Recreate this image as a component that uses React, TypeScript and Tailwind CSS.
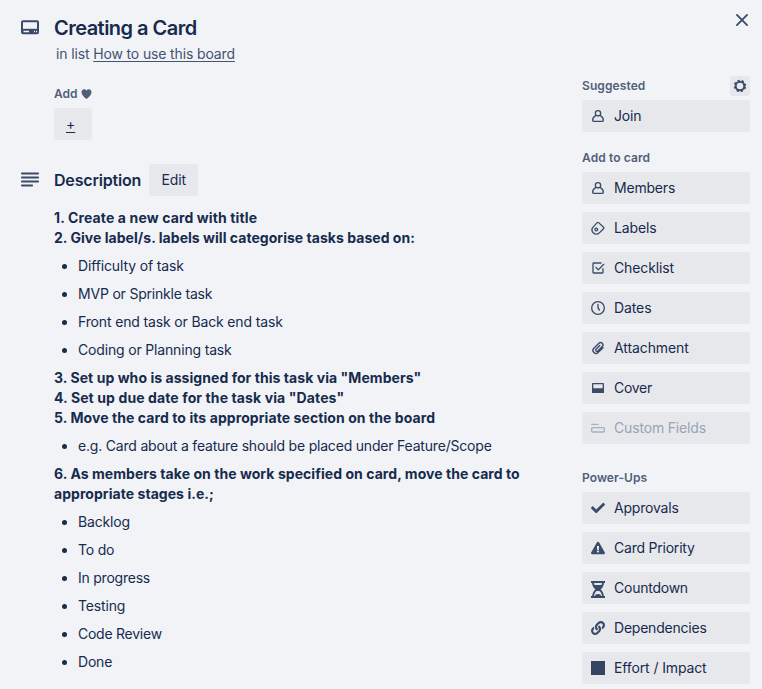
import type { ReactNode } from "react";
import { FaCheck, FaExclamationTriangle, FaLink } from "react-icons/fa";

function Svg({ children }: { children: ReactNode }) {
  return (
    <svg viewBox="0 0 24 24" className="size-4 shrink-0" fill="none" stroke="currentColor" strokeWidth="2" strokeLinejoin="round" strokeLinecap="round">
      {children}
    </svg>
  );
}

const PersonIcon = () => (
  <Svg>
    <circle cx="12" cy="8" r="4" />
    <path d="M8.500 11.500C5.500 13 4 15.500 4 18.500c0 1 .4 1.500 1.500 1.500h13c1.100 0 1.500-.5 1.500-1.500 0-3-1.500-5.500-4.500-7" />
  </Svg>
);
const LabelIcon = () => (
  <Svg>
    <path d="M4 11.500 10.700 4a1.500 1.500 0 0 1 2.200-.1l7.400 7a1.500 1.500 0 0 1 0 2.200l-6.300 6.200a6.100 6.100 0 0 1-8.800.2c-2.300-2.200-2.900-5.400-1.200-8Z" />
    <circle cx="9.400" cy="14.200" r="2" />
  </Svg>
);
const ChecklistIcon = () => (
  <Svg>
    <path d="M16.500 4.500H5.500a1 1 0 0 0-1 1v13a1 1 0 0 0 1 1h13a1 1 0 0 0 1-1V13" />
    <path d="m9 11 3.500 3.800L20.500 6.500" />
  </Svg>
);
const ClockIcon = () => (
  <Svg>
    <circle cx="12" cy="12" r="9.500" />
    <path d="M12 6.500V12l2.200 3" />
  </Svg>
);
const ClipIcon = () => (
  <Svg>
    <path d="m19.500 11.500-7.300 7.300a4.500 4.500 0 0 1-6.400-6.400l7.600-7.600a3.500 3.500 0 0 1 5 0c1.400 1.400 1.400 3.500 0 4.900l-6.800 6.800a1.800 1.800 0 0 1-2.600-2.600l5.700-5.700" />
  </Svg>
);
const CoverIcon = () => (
  <Svg>
    <path d="M4 5.500h16v13H4z" />
    <path d="M4 13.500h16v5H4z" fill="currentColor" />
  </Svg>
);
const FieldsIcon = () => (
  <Svg>
    <path d="M2.500 6.500h9.500" />
    <rect x="2.500" y="11.500" width="19" height="6.500" rx="1.500" />
  </Svg>
);
const HourglassIcon = () => (
  <svg viewBox="0 0 14 17" className="h-[17px] w-3.5 shrink-0 translate-y-px" fill="none" stroke="currentColor">
    <path d="M0 1h14M0 16h14" strokeWidth="2" />
    <path d="M2 1c0 4 1.200 5.700 4 7.500C3.200 10.300 2 12 2 16M12 1c0 4-1.200 5.700-4 7.500 2.800 1.800 4 3.500 4 7.500" strokeWidth="1.900" />
    <path d="M2.500 4h9L8.800 8.500 9 10H5l.2-1.500z" fill="currentColor" stroke="none" />
    <path d="M4 15c0-1.200 1.200-2 3-2s3 .8 3 2z" fill="currentColor" stroke="none" />
  </svg>
);
const SquareIcon = () => <span className="size-3.5 bg-[#344563]" />;

type Item = { label: string; icon: ReactNode; track?: string; disabled?: boolean };

function SideButton({ label, icon, track = "", disabled }: Item) {
  return (
    <button className={`flex h-8 w-[168px] items-center rounded-[3px] bg-[#e7e8ec] pl-2 text-sm leading-5 ${disabled ? "text-[#97a3b6]" : "text-[#172b4d]"}`}>
      <span className={`mr-2 flex size-4 items-center justify-center ${disabled ? "text-[#a5b0c2]" : "text-[#3b4b68]"}`}>{icon}</span>
      <span className={`whitespace-nowrap ${track}`}>{label}</span>
    </button>
  );
}

const addItems: Item[] = [
  { label: "Members", icon: <PersonIcon />, track: "tracking-[-0.2px]" },
  { label: "Labels", icon: <LabelIcon />, track: "tracking-[-0.15px]" },
  { label: "Checklist", icon: <ChecklistIcon />, track: "tracking-[-0.12px]" },
  { label: "Dates", icon: <ClockIcon />, track: "tracking-[-0.1px]" },
  { label: "Attachment", icon: <ClipIcon />, track: "tracking-[-0.1px]" },
  { label: "Cover", icon: <CoverIcon />, track: "tracking-[-0.3px]" },
  { label: "Custom Fields", icon: <FieldsIcon />, track: "tracking-[-0.17px]", disabled: true },
];
const powerItems: Item[] = [
  { label: "Approvals", icon: <FaCheck className="size-3.5" />, track: "tracking-[-0.2px]" },
  { label: "Card Priority", icon: <FaExclamationTriangle className="size-3.5" />, track: "tracking-[-0.22px]" },
  { label: "Countdown", icon: <HourglassIcon />, track: "tracking-[-0.24px]" },
  { label: "Dependencies", icon: <FaLink className="size-3.5" />, track: "tracking-[-0.22px]" },
  { label: "Effort / Impact", icon: <SquareIcon />, track: "tracking-[-0.12px]" },
];

type Line = { text: string; track: string };

function Bullets({ items }: { items: Line[] }) {
  return (
    <ul className="my-2 flex flex-col gap-2">
      {items.map((i) => (
        <li key={i.text} className="flex h-5 items-center">
          <span className="mr-[11px] ml-2 size-[5px] rounded-full bg-[#172b4d]" />
          <span className={`whitespace-nowrap ${i.track}`}>{i.text}</span>
        </li>
      ))}
    </ul>
  );
}

function Strong({ lines }: { lines: Line[] }) {
  return (
    <div className="font-bold">
      {lines.map((l) => (
        <p key={l.text} className={`h-5 whitespace-nowrap ${l.track}`}>{l.text}</p>
      ))}
    </div>
  );
}

export default function App() {
  return (
    <div className="flex h-[689px] w-[762px] overflow-hidden bg-[#f1f3f7] font-['Inter',sans-serif] text-sm leading-5 text-[#172b4d]">
      <main className="w-[582px] shrink-0 pl-5">
        <header className="flex pt-4">
          <svg viewBox="0 0 20 16" className="mt-1 mr-3.5 h-4 w-5 text-[#3b4b68]" fill="none">
            <rect x="2" y="1.300" width="16" height="12" rx="1" stroke="currentColor" strokeWidth="2" />
            <path d="M2 8.800h16v4.500H2z" fill="currentColor" />
            <path d="M3.500 11.500H9M14 11.500h1M16 11.500h1" stroke="#f1f3f7" strokeWidth="1.300" />
          </svg>
          <div>
            <h1 className="h-6 text-xl leading-6 font-semibold tracking-[-0.53px] whitespace-nowrap">Creating a Card</h1>
            <p className="mt-1 ml-0.5 tracking-[-0.14px] text-[#44546f]">
              <span>in list </span><a className="underline underline-offset-2">How to use this board</a>
            </p>
          </div>
        </header>

        <section className="mt-5 ml-[34px]">
          <h3 className="flex h-5 items-center text-xs font-semibold text-[#505f79]">
            <span>Add</span>
            <svg viewBox="0 0 12 11" className="ml-[3px] h-[10px] w-[11px]" fill="currentColor">
              <path d="M6 11C3 8.700.5 6.300.5 3.500.5 1.600 1.800.3 3.400.3c1 0 2 .5 2.600 1.500C6.600.8 7.600.3 8.600.3c1.600 0 2.900 1.300 2.900 3.200C11.500 6.300 9 8.700 6 11Z" />
            </svg>
          </h3>
          <button className="mt-1 flex h-8 w-[38px] items-center rounded-[3px] bg-[#e7e8ec] pl-3 underline underline-offset-[3px]">+</button>
        </section>

        <section className="mt-6">
          <div className="flex h-8 items-center">
            <svg viewBox="0 0 20 16" className="mr-3.5 h-4 w-5 text-[#3b4b68]" stroke="currentColor" strokeWidth="1.900" strokeLinecap="round">
              <path d="M1.900 1.500h16.200M1.900 5.500h16.200M1.900 9.500h16.200M1.900 13.500h10.200" />
            </svg>
            <h2 className="text-base font-semibold tracking-[-0.18px]">Description</h2>
            <button className="ml-2 h-8 w-[49px] rounded-[3px] bg-[#e7e8ec] tracking-[-0.1px]">Edit</button>
          </div>
          <div className="mt-3 ml-[34px]">
            <Strong lines={[
              { text: "1. Create a new card with title", track: "tracking-[0.13px]" },
              { text: "2. Give label/s. labels will categorise tasks based on:", track: "tracking-[0.035px]" },
            ]} />
            <Bullets items={[
              { text: "Difficulty of task", track: "tracking-[-0.14px]" },
              { text: "MVP or Sprinkle task", track: "tracking-[-0.2px]" },
              { text: "Front end task or Back end task", track: "tracking-[-0.15px]" },
              { text: "Coding or Planning task", track: "tracking-[-0.17px]" },
            ]} />
            <Strong lines={[
              { text: '3. Set up who is assigned for this task via "Members"', track: "tracking-[0.055px]" },
              { text: '4. Set up due date for the task via "Dates"', track: "tracking-[0.11px]" },
              { text: "5. Move the card to its appropriate section on the board", track: "tracking-[0.08px]" },
            ]} />
            <Bullets items={[{ text: "e.g. Card about a feature should be placed under Feature/Scope", track: "tracking-[-0.195px]" }]} />
            <Strong lines={[
              { text: "6. As members take on the work specified on card, move the card to", track: "tracking-[0.055px]" },
              { text: "appropriate stages i.e.;", track: "tracking-[0.05px]" },
            ]} />
            <Bullets items={[
              { text: "Backlog", track: "tracking-[-0.17px]" },
              { text: "To do", track: "tracking-[-0.2px]" },
              { text: "In progress", track: "tracking-[-0.23px]" },
              { text: "Testing", track: "tracking-[-0.15px]" },
              { text: "Code Review", track: "tracking-[-0.25px]" },
              { text: "Done", track: "tracking-[-0.2px]" },
            ]} />
          </div>
        </section>
      </main>

      <aside className="flex w-[180px] shrink-0 flex-col">
        <div className="flex h-[76px] justify-end pt-3 pr-3">
          <svg viewBox="0 0 16 16" className="size-4 text-[#3b4b68]" stroke="currentColor" strokeWidth="1.800" strokeLinecap="round">
            <path d="m2.900 2.900 10.200 10.200M13.100 2.900 2.900 13.100" />
          </svg>
        </div>
        <div className="flex h-5 w-[168px] items-center justify-between text-xs font-semibold text-[#505f79]">
          <span className="tracking-[0.1px]">Suggested</span>
          <span className="flex size-5 items-center justify-center rounded-[3px] bg-[#e7e8ec]">
            <svg viewBox="0 0 14 14" className="size-3.5 text-[#3b4b68]" fill="none" stroke="currentColor">
              <circle cx="7" cy="7" r="4.300" strokeWidth="2" />
              <circle cx="7" cy="7" r="5.500" strokeWidth="1.500" strokeDasharray="2.200 2.120" strokeDashoffset="-1.060" />
            </svg>
          </span>
        </div>
        <div className="mt-1"><SideButton label="Join" icon={<PersonIcon />} track="tracking-[-0.2px]" /></div>
        <h3 className="mt-4 mb-1 h-5 text-xs leading-5 font-semibold tracking-[0.1px] text-[#505f79]">Add to card</h3>
        <div className="flex flex-col gap-2">{addItems.map((i) => <SideButton key={i.label} {...i} />)}</div>
        <h3 className="mt-6 mb-1 h-5 text-xs leading-5 font-semibold tracking-[0.06px] text-[#505f79]">Power-Ups</h3>
        <div className="flex flex-col gap-2">{powerItems.map((i) => <SideButton key={i.label} {...i} />)}</div>
      </aside>
    </div>
  );
}
